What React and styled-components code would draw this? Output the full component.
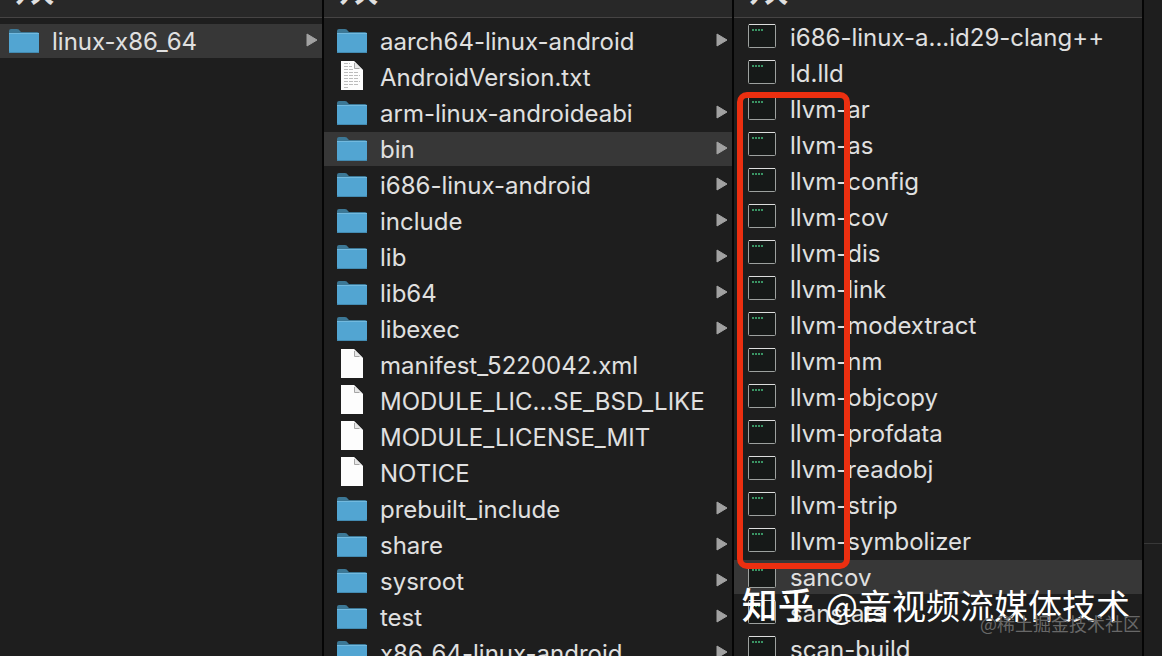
import React from 'react'
import styled, { createGlobalStyle } from 'styled-components'

const folders = [
    { name: 'linux-x86_64', kind: 'folder', selected: true },
]

const toolchain = [
    { name: 'aarch64-linux-android', kind: 'folder' },
    { name: 'AndroidVersion.txt', kind: 'text' },
    { name: 'arm-linux-androideabi', kind: 'folder' },
    { name: 'bin', kind: 'folder', selected: true },
    { name: 'i686-linux-android', kind: 'folder' },
    { name: 'include', kind: 'folder' },
    { name: 'lib', kind: 'folder' },
    { name: 'lib64', kind: 'folder' },
    { name: 'libexec', kind: 'folder' },
    { name: 'manifest_5220042.xml', kind: 'file' },
    { name: 'MODULE_LIC...SE_BSD_LIKE', kind: 'file' },
    { name: 'MODULE_LICENSE_MIT', kind: 'file' },
    { name: 'NOTICE', kind: 'file' },
    { name: 'prebuilt_include', kind: 'folder' },
    { name: 'share', kind: 'folder' },
    { name: 'sysroot', kind: 'folder' },
    { name: 'test', kind: 'folder' },
    { name: 'x86_64-linux-android', kind: 'folder' },
]

const binaries = [
    'i686-linux-a...id29-clang++',
    'ld.lld',
    'llvm-ar',
    'llvm-as',
    'llvm-config',
    'llvm-cov',
    'llvm-dis',
    'llvm-link',
    'llvm-modextract',
    'llvm-nm',
    'llvm-objcopy',
    'llvm-profdata',
    'llvm-readobj',
    'llvm-strip',
    'llvm-symbolizer',
    'sancov',
    'sanstats',
    'scan-build',
].map((name) => ({ name, kind: 'exec', selected: name === 'sancov' }))

const FolderIcon = () => (
    <svg width="30" height="26" viewBox="0 0 30 26">
        <path d="M0 7V4q0-2 2-2h6q2 0 3 2l1 1h16q2 0 2 2v5H0z" fill="#3c7896" />
        <path d="M0 7q0-1 1-1h28q1 0 1 1v17q0 2-1 2H1q-1 0-1-2z" fill="#52a5d2" />
        <path d="M0 6.5h30" stroke="#72b9de" />
        <path d="M0 25.5h30" stroke="#438bb2" />
    </svg>
)

const FileIcon = ({ lines }) => (
    <svg width="30" height="30" viewBox="0 0 30 30">
        <path d="M4 0h13l9 9v20H4z" fill="#fdfdfd" />
        <path d="M17 0l9 9q-3-2-8-2 1-4-1-7z" fill="#e6e6e6" />
        <path d="M17.5 2v5.5h5" fill="none" stroke="#a5a5a5" />
        {lines && (
            <path
                d="M7 2.5h6M7 5.5h8M7 8.5h9M7 11.5h15M7 14.5h16M7 17.5h15M7 20.5h16M7 23.5h14M7 26.5h5"
                stroke="#bcbcbc"
                strokeDasharray="4 1"
            />
        )}
    </svg>
)

const ExecIcon = () => (
    <svg width="30" height="26" viewBox="0 0 30 26">
        <rect x="1.5" y="1.5" width="27" height="23" rx="1" fill="#161918" stroke="#9da19f" />
        <path d="M2 1.5h26" stroke="#dddddd" />
        <path d="M5 7h11" stroke="#3a9464" strokeWidth="2" strokeDasharray="2 1" />
    </svg>
)

const icons = {
    folder: <FolderIcon />,
    file: <FileIcon />,
    text: <FileIcon lines />,
    exec: <ExecIcon />,
}

const FileColumn = ({ items, header, compact }) => (
    <Column>
        <Header>{header}</Header>
        <List $compact={compact}>
            {items.map((item) => (
                <li key={item.name}>
                    <Row $selected={item.selected}>
                        <Icon>{icons[item.kind]}</Icon>
                        <Name>{item.name}</Name>
                        {item.kind === 'folder' && (
                            <Arrow viewBox="0 0 12 14">
                                <path d="M1 1l10 6-10 6z" fill="#a2a2a2" stroke="#a2a2a2" strokeLinejoin="round" />
                            </Arrow>
                        )}
                    </Row>
                </li>
            ))}
        </List>
    </Column>
)

const App = () => {
    return (
        <>
            <GlobalStyle />
            <Browser>
                <FileColumn items={folders} header="双" />
                <FileColumn items={toolchain} header="双" />
                <FileColumn items={binaries} header="双" compact />
                <Preview />
                <Marker />
                <Watermark><strong>知乎</strong>@音视频流媒体技术</Watermark>
                <Community>@稀土掘金技术社区</Community>
            </Browser>
        </>
    )
}

export default App

const GlobalStyle = createGlobalStyle`
    * {
        box-sizing: border-box;
    }

    body {
        margin: 0;
        background: #1e1e1e;
        color: #e0e0e0;
        font-family: Inter, "Liberation Sans", "Noto Sans CJK SC", sans-serif;
    }
`

const Browser = styled.main`
    position: relative;
    display: grid;
    grid-template-columns: 324fr 410fr 410fr 18fr;
    height: 100vh;
    overflow: hidden;
`

const Column = styled.section`
    min-width: 0;
    border-right: 2px solid #050505;
`

const Header = styled.header`
    display: flex;
    align-items: flex-end;
    height: 18px;
    padding: 0 15px 13px;
    overflow: hidden;
    background: #282828;
    border-bottom: 1px solid #464444;
    font-family: "Noto Sans CJK SC", sans-serif;
    font-size: 40px;
    font-weight: 500;
    line-height: 40px;
`

const List = styled.ul`
    margin: 0;
    padding: ${({ $compact }) => ($compact ? '2px' : '6px')} 0 0;
    list-style: none;
`

const Row = styled.button`
    display: flex;
    align-items: center;
    width: 100%;
    height: 34px;
    margin-bottom: 2px;
    padding: 0 4px 2px 13px;
    border: 0;
    background: ${({ $selected }) => ($selected ? '#373737' : 'transparent')};
    color: inherit;
    font: inherit;
    font-size: 24px;
    line-height: 32px;
    text-align: left;

    section:first-child & {
        padding-left: 9px;
    }
`

const Icon = styled.span`
    display: flex;
    flex: none;
    margin-right: 13px;
`

const Name = styled.span`
    flex: 1;
    padding-top: 4px;
    white-space: nowrap;
`

const Arrow = styled.svg`
    flex: none;
    width: 12px;
    height: 14px;
`

const Preview = styled.aside`
    height: 544px;
    border-bottom: 1px solid #383838;
`

const Marker = styled.div`
    position: absolute;
    top: 92px;
    left: 737px;
    width: 113px;
    height: 477px;
    border: 6px solid #ec2f10;
    border-radius: 10px;
`

const Watermark = styled.div`
    position: absolute;
    right: 32px;
    bottom: 27px;
    color: #fff;
    font-family: "Noto Sans CJK SC", sans-serif;
    font-size: 34px;
    line-height: 48px;
    white-space: nowrap;

    strong {
        margin-right: 12px;
        font-size: 36px;
        font-weight: 500;
    }
`

const Community = styled.div`
    position: absolute;
    right: 21px;
    bottom: 20px;
    color: #686868;
    font-family: "Noto Sans CJK SC", sans-serif;
    font-size: 18px;
    line-height: 26px;
    white-space: nowrap;
`
